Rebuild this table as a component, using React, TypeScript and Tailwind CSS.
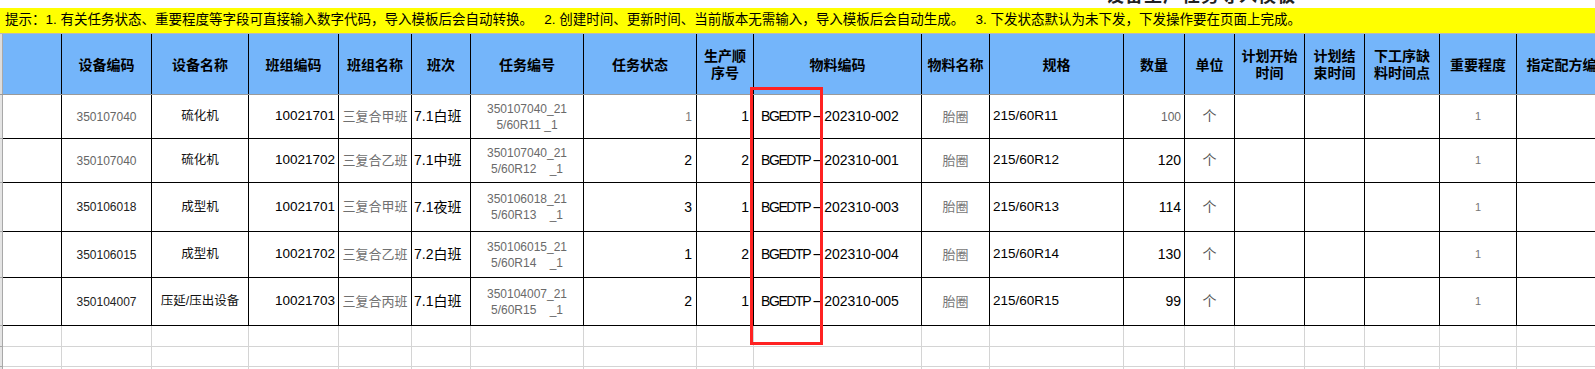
import React from 'react';

const COLS =
  'grid grid-cols-[3px_59px_90px_97px_90px_73px_59px_113px_113px_57px_168px_68px_134px_61px_50px_70px_60px_75px_77px_104px]';

type Row = {
  code: string;
  codeGray: boolean;
  name: string;
  team: string;
  teamName: string;
  shift: string;
  task1: string;
  task2: string;
  status: string;
  statusGray: boolean;
  seq: string;
  material: string;
  spec: string;
  qty: string;
  qtyGray: boolean;
  h: string;
};

const rows: Row[] = [
  { code: '350107040', codeGray: true, name: '硫化机', team: '10021701', teamName: '三复合甲班', shift: '7.1白班', task1: '350107040_21', task2: '5/60R11 _1', status: '1', statusGray: true, seq: '1', material: '202310-002', spec: '215/60R11', qty: '100', qtyGray: true, h: 'h-[44px]' },
  { code: '350107040', codeGray: true, name: '硫化机', team: '10021702', teamName: '三复合乙班', shift: '7.1中班', task1: '350107040_21', task2: '5/60R12    _1', status: '2', statusGray: false, seq: '2', material: '202310-001', spec: '215/60R12', qty: '120', qtyGray: false, h: 'h-[44px]' },
  { code: '350106018', codeGray: false, name: '成型机', team: '10021701', teamName: '三复合甲班', shift: '7.1夜班', task1: '350106018_21', task2: '5/60R13    _1', status: '3', statusGray: false, seq: '1', material: '202310-003', spec: '215/60R13', qty: '114', qtyGray: false, h: 'h-[49px]' },
  { code: '350106015', codeGray: false, name: '成型机', team: '10021702', teamName: '三复合乙班', shift: '7.2白班', task1: '350106015_21', task2: '5/60R14    _1', status: '1', statusGray: false, seq: '2', material: '202310-004', spec: '215/60R14', qty: '130', qtyGray: false, h: 'h-[46px]' },
  { code: '350104007', codeGray: false, name: '压延/压出设备', team: '10021703', teamName: '三复合丙班', shift: '7.1白班', task1: '350104007_21', task2: '5/60R15    _1', status: '2', statusGray: false, seq: '1', material: '202310-005', spec: '215/60R15', qty: '99', qtyGray: false, h: 'h-[48px]' },
];

const headers: string[][] = [
  [],
  ['设备编码'],
  ['设备名称'],
  ['班组编码'],
  ['班组名称'],
  ['班次'],
  ['任务编号'],
  ['任务状态'],
  ['生产顺', '序号'],
  ['物料编码'],
  ['物料名称'],
  ['规格'],
  ['数量'],
  ['单位'],
  ['计划开始', '时间'],
  ['计划结', '束时间'],
  ['下工序缺', '料时间点'],
  ['重要程度'],
  ['指定配方编号'],
];

const cell = 'border-r border-b border-black flex items-center overflow-hidden whitespace-nowrap';

const App: React.FC = () => {
  return (
    <div className="relative w-[1595px] h-[369px] overflow-hidden bg-white font-['Liberation_Sans','Noto_Sans_CJK_SC',sans-serif] text-black">
      {/* clipped title */}
      <div className="h-[8px] overflow-hidden">
        <div className="pl-[1106px] mt-[-16px] text-[18px] leading-[20px] font-bold text-[#222] tracking-[1px] font-['Noto_Sans_CJK_SC',sans-serif]">
          设备生产任务导入模板
        </div>
      </div>

      {/* hint band */}
      <div className="h-[26px] bg-[#ffff00] border-b border-[#b8b8b8] flex items-center pl-[5px] text-[13.5px] whitespace-nowrap">
        提示：1. 有关任务状态、重要程度等字段可直接输入数字代码，导入模板后会自动转换。&nbsp;&nbsp;&nbsp;2. 创建时间、更新时间、当前版本无需输入，导入模板后会自动生成。&nbsp;&nbsp;&nbsp;3. 下发状态默认为未下发，下发操作要在页面上完成。
      </div>

      {/* header */}
      <div className={`${COLS} h-[61px] bg-[#74b5fa] border-b border-[#9a9a9a]`}>
        <div className="bg-[#dcdcdc] border-r border-[#a8a8a8]" />
        {headers.map((h, i) => (
          <div
            key={i}
            className="border-r border-black flex flex-col items-center justify-center overflow-hidden whitespace-nowrap text-[14px] leading-[17px] font-bold font-['Noto_Sans_CJK_SC',sans-serif]"
          >
            {h.map((l, j) => (
              <span key={j}>{l}</span>
            ))}
          </div>
        ))}
      </div>

      {/* data rows */}
      {rows.map((r, i) => (
        <div key={i} className={`${COLS} ${r.h}`}>
          <div className="bg-[#e4e4e4] border-r border-b border-[#a8a8a8]" />
          <div className={cell} />
          <div className={`${cell} justify-center text-[12px] ${r.codeGray ? 'text-[#666]' : 'text-[#222]'}`}>{r.code}</div>
          <div className={`${cell} justify-center text-[12.5px] text-[#111]`}>{r.name}</div>
          <div className={`${cell} justify-end pr-[3px] text-[13.5px]`}>{r.team}</div>
          <div className={`${cell} justify-center text-[13px] text-[#707070]`}>{r.teamName}</div>
          <div className={`${cell} pl-[2px] text-[14px]`}>{r.shift}</div>
          <div className={`${cell} flex-col justify-center text-[12px] leading-[16px] text-[#6a6a6a] whitespace-pre`}>
            <span>{r.task1}</span>
            <span>{r.task2}</span>
          </div>
          <div className={`${cell} justify-end pr-[4px] ${r.statusGray ? 'text-[12px] text-[#777]' : 'text-[14px]'}`}>{r.status}</div>
          <div className={`${cell} justify-end pr-[4px] text-[14px]`}>{r.seq}</div>
          <div className={`${cell} pl-[7px] text-[14px]`}>
            <span className="tracking-[-1.4px]">BGEDTP</span>
            <span className="inline-block w-[14px] text-center scale-x-[2]">-</span>
            <span>{r.material}</span>
          </div>
          <div className={`${cell} justify-center text-[13px] text-[#777]`}>胎圈</div>
          <div className={`${cell} pl-[3px] text-[13.5px]`}>{r.spec}</div>
          <div className={`${cell} justify-end pr-[3px] ${r.qtyGray ? 'text-[12px] text-[#666]' : 'text-[14px]'}`}>{r.qty}</div>
          <div className={`${cell} justify-center text-[14px] text-[#555]`}>个</div>
          <div className={cell} />
          <div className={cell} />
          <div className={cell} />
          <div className={`${cell} justify-center text-[11px] text-[#777]`}>1</div>
          <div className={cell} />
        </div>
      ))}

      {/* empty grid rows */}
      {['h-[21px]', 'h-[20px]', 'h-[20px]'].map((h, i) => (
        <div key={i} className={`${COLS} ${h}`}>
          <div className="bg-[#e4e4e4] border-r border-b border-[#a8a8a8]" />
          {Array.from({ length: 19 }).map((_, j) => (
            <div key={j} className="border-r border-b border-[#d4d4d4]" />
          ))}
        </div>
      ))}

      {/* red annotation box */}
      <div className="absolute left-[750px] top-[87px] w-[73px] h-[258px] border-[3px] border-[#ff2222] pointer-events-none" />
    </div>
  );
};

export default App;
